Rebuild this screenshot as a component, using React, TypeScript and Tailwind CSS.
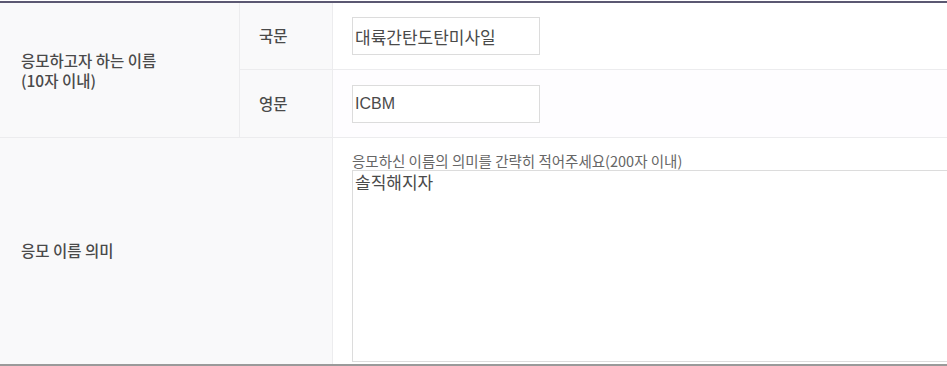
import React from "react";

const kr = "font-['Noto_Sans_CJK_KR',sans-serif]";
const field = "font-['Liberation_Sans','Noto_Sans_CJK_KR',sans-serif]";

function NameInput({ value, size }: { value: string; size: string }) {
  return (
    <input
      readOnly
      value={value}
      className={`h-[38px] w-[188px] border border-[#dcdcdc] bg-white px-[2px] text-[#4a4a4a] outline-none ${size} ${field}`}
    />
  );
}

export default function App() {
  return (
    <div className={`w-[947px] overflow-hidden bg-white pt-[1px] ${kr}`}>
      <div className="border-t-2 border-b-2 border-t-[#5b5872] border-b-[#9a9a9a]">
        {/* name row: 국문 / 영문 */}
        <div className="flex border-b border-[#ececee]">
          <div className="flex w-[240px] shrink-0 items-center border-r border-[#ececee] bg-[#f9f9fa] pl-[21px] text-[15.5px] leading-[20px] font-medium text-[#4a4a4a]">
            <p>
              응모하고자 하는 이름
              <br />
              (10자 이내)
            </p>
          </div>
          <div className="flex-1">
            <div className="flex h-[67px] border-b border-[#ececee]">
              <div className="flex w-[93px] shrink-0 items-center border-r border-[#ececee] bg-[#f9f9fa] pl-[19px] text-[15.5px] font-medium text-[#4a4a4a]">
                국문
              </div>
              <div className="flex flex-1 items-center bg-white pl-[19px]">
                <NameInput value="대륙간탄도탄미사일" size="text-[17px]" />
              </div>
            </div>
            <div className="flex h-[67px]">
              <div className="flex w-[93px] shrink-0 items-center border-r border-[#ececee] bg-[#f9f9fa] pl-[19px] text-[15.5px] font-medium text-[#4a4a4a]">
                영문
              </div>
              <div className="flex flex-1 items-center bg-[#fefdff] pl-[19px]">
                <NameInput value="ICBM" size="text-[16px]" />
              </div>
            </div>
          </div>
        </div>

        {/* meaning row */}
        <div className="flex h-[226px]">
          <div className="flex w-[333px] shrink-0 items-center border-r border-[#ececee] bg-[#f9f9fa] pl-[21px] text-[15.5px] font-medium text-[#4a4a4a]">
            응모 이름 의미
          </div>
          <div className="flex min-w-0 flex-1 flex-col bg-white pl-[19px] pt-[14px] pb-[2px]">
            <p className="whitespace-nowrap text-[14.5px] leading-[18px] text-[#666]">
              응모하신 이름의 의미를 간략히 적어주세요(200자 이내)
            </p>
            <textarea
              readOnly
              value="솔직해지자"
              className={`w-[620px] flex-1 shrink-0 resize-none border border-[#dcdcdc] px-[2px] py-[2px] text-[17px] leading-[22px] text-[#4a4a4a] outline-none ${field}`}
            />
          </div>
        </div>
      </div>
    </div>
  );
}
